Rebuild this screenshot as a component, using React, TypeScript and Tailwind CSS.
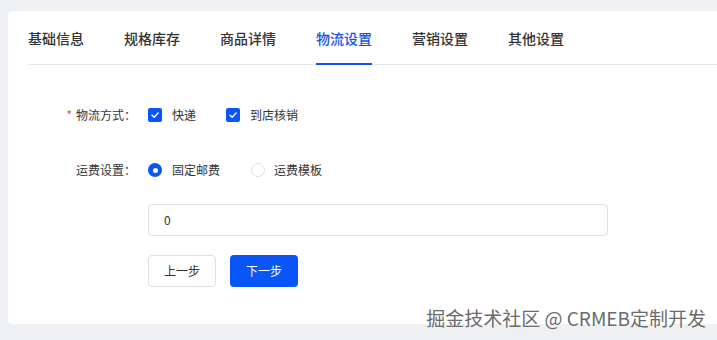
const tabs = ["基础信息", "规格库存", "商品详情", "物流设置", "营销设置", "其他设置"];

function Check() {
  return (
    <span className="flex h-[14px] w-[14px] items-center justify-center rounded-[2px] bg-[#0a55f5]">
      <svg width="10" height="10" viewBox="0 0 10 10" fill="none">
        <path d="M2 5.2 4.2 7.3 8.2 2.9" stroke="white" strokeWidth="1.4" strokeLinecap="round" strokeLinejoin="round" />
      </svg>
    </span>
  );
}

function Radio({ on }: { on?: boolean }) {
  return on ? (
    <span className="flex h-[14px] w-[14px] items-center justify-center rounded-full bg-[#0a55f5]">
      <span className="h-[5px] w-[5px] rounded-full bg-white" />
    </span>
  ) : (
    <span className="h-[14px] w-[14px] rounded-full border border-[#dcdfe6] bg-white" />
  );
}

export default function App() {
  return (
    <div
      className="relative h-[340px] w-[717px] overflow-hidden bg-[#eef0f3] pl-2 pt-[11px]"
      style={{ fontFamily: '"Noto Sans CJK SC", "Noto Sans", sans-serif' }}
    >
      <div className="h-[313px] w-[720px] rounded-[4px] bg-white pl-5">
        <div className="flex h-[54px] gap-10 border-b border-[#e4e7ed] pt-[16px]">
          {tabs.map((t, i) => (
            <div
              key={t}
              className={
                i === 3
                  ? "-mb-px h-[38px] border-b-2 border-[#0f55e8] text-[14px] leading-[22px] font-medium text-[#0f55e8]"
                  : "h-[38px] text-[14px] leading-[22px] font-medium text-[#333]"
              }
            >
              {t}
            </div>
          ))}
        </div>

        <div className="mt-[41px] flex h-[18px] items-center text-[12px] text-[#333]">
          <div className="w-[120px] pr-[12px] text-right">
            <span className="mr-1 text-[#f04848]">*</span>物流方式：
          </div>
          <div className="flex items-center gap-[10px]">
            <Check />
            <span>快递</span>
          </div>
          <div className="ml-[30px] flex items-center gap-[10px]">
            <Check />
            <span>到店核销</span>
          </div>
        </div>

        <div className="mt-[37px] flex h-[18px] items-center text-[12px] text-[#333]">
          <div className="w-[120px] pr-[12px] text-right">运费设置：</div>
          <div className="flex items-center gap-[10px]">
            <Radio on />
            <span>固定邮费</span>
          </div>
          <div className="ml-[31px] flex items-center gap-[9px]">
            <Radio />
            <span>运费模板</span>
          </div>
        </div>

        <div className="ml-[120px] mt-[25px] flex h-[32px] w-[460px] items-center rounded-[4px] border border-[#dcdfe6] px-[15px] text-[12px] text-[#333]">
          0
        </div>

        <div className="ml-[120px] mt-[19px] flex gap-[14px] text-[12px]">
          <button className="h-[32px] w-[68px] rounded-[4px] border border-[#dcdfe6] bg-white text-[#333]">上一步</button>
          <button className="h-[32px] w-[68px] rounded-[4px] bg-[#0a55f5] text-white">下一步</button>
        </div>
      </div>

      <div
        className="absolute right-[11px] top-[305px] text-[19px] leading-[26px] text-[#6b6b6b]"
        style={{ textShadow: "0 0 2px #fff" }}
      >
        掘金技术社区 @ CRMEB定制开发
      </div>
    </div>
  );
}
